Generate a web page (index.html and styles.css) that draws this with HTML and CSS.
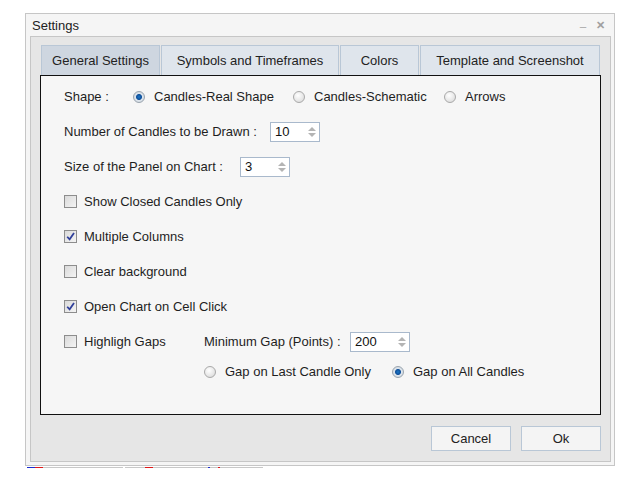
FILE: index.html
```html
<!DOCTYPE html>
<html lang="en">
<head>
  <meta charset="UTF-8">
  <title>Settings</title>
  <link rel="stylesheet" href="styles.css">
</head>
<body>
  <div class="window">
    <div class="titlebar">
      <span class="title">Settings</span>
      <span class="win-btn min">_</span>
      <span class="win-btn close">&#x2715;</span>
    </div>

    <div class="content">
      <div class="tabs">
        <div class="tab active" style="width: 119px">General Settings</div>
        <div class="tab" style="width: 178px">Symbols and Timeframes</div>
        <div class="tab" style="width: 79px">Colors</div>
        <div class="tab" style="width: 180px">Template and Screenshot</div>
      </div>

      <div class="panel">
        <div class="row">
          <span class="label shape-label">Shape :</span>
          <label class="radio-item w-real"><span class="radio checked"></span>Candles-Real Shape</label>
          <label class="radio-item w-schem"><span class="radio"></span>Candles-Schematic</label>
          <label class="radio-item"><span class="radio"></span>Arrows</label>
        </div>

        <div class="row">
          <span class="label w-candles">Number of Candles to be Drawn :</span>
          <div class="spin"><span class="spin-val">10</span><span class="arrows"><i class="up"></i><i class="down"></i></span></div>
        </div>

        <div class="row">
          <span class="label w-size">Size of the Panel on Chart :</span>
          <div class="spin"><span class="spin-val">3</span><span class="arrows"><i class="up"></i><i class="down"></i></span></div>
        </div>

        <div class="row">
          <label class="check-item"><span class="check"></span>Show Closed Candles Only</label>
        </div>

        <div class="row">
          <label class="check-item"><span class="check checked"><svg viewBox="0 0 10 10"><path d="M2 5.2 L4.2 7.6 L8.2 1.8"/></svg></span>Multiple Columns</label>
        </div>

        <div class="row">
          <label class="check-item"><span class="check"></span>Clear background</label>
        </div>

        <div class="row">
          <label class="check-item"><span class="check checked"><svg viewBox="0 0 10 10"><path d="M2 5.2 L4.2 7.6 L8.2 1.8"/></svg></span>Open Chart on Cell Click</label>
        </div>

        <div class="row">
          <label class="check-item gaps"><span class="check"></span>Highligh Gaps</label>
          <span class="label w-gap">Minimum Gap (Points) :</span>
          <div class="spin wide"><span class="spin-val">200</span><span class="arrows"><i class="up"></i><i class="down"></i></span></div>
        </div>

        <div class="row short indent">
          <label class="radio-item w-last"><span class="radio"></span>Gap on Last Candle Only</label>
          <label class="radio-item"><span class="radio checked"></span>Gap on All Candles</label>
        </div>
      </div>

      <div class="buttons">
        <button>Cancel</button>
        <button>Ok</button>
      </div>
    </div>
  </div>

  <div class="behind">
    <span class="blue" style="width: 8px"></span>
    <span class="red" style="width: 8px"></span>
    <span class="gray" style="width: 80px"></span>
    <span class="gap" style="width: 2px"></span>
    <span class="gray" style="width: 20px"></span>
    <span class="red" style="width: 8px"></span>
    <span class="gray" style="width: 55px"></span>
    <span class="blue" style="width: 2px"></span>
    <span class="gray" style="width: 8px"></span>
    <span class="red" style="width: 2px"></span>
    <span class="gray" style="width: 43px"></span>
  </div>
</body>
</html>
```

FILE: styles.css
```css
body {
  margin: 0;
  background: #fff;
  font-family: "Liberation Sans", Arial, sans-serif;
  font-size: 13px;
  color: #1e1e1e;
}

.window {
  margin: 13px 0 0 25px;
  width: 588px;
  height: 451px;
  border: 1px solid #c6c6c6;
  background: #f5f5f5;
  display: flex;
  flex-direction: column;
}

.titlebar {
  height: 22px;
  display: flex;
  align-items: center;
  padding: 0 0 0 6px;
}

.title {
  flex: 1;
  font-size: 13px;
  color: #222;
}

.win-btn {
  color: #a0a0a0;
  font-size: 11px;
}

.win-btn.min {
  margin-right: 10px;
  position: relative;
  top: -3px;
}

.win-btn.close {
  margin-right: 9px;
  font-weight: bold;
}

.content {
  flex: 1;
  margin: 0 3px 3px 4px;
  border: 1px solid #c6c6c6;
  background: #e6e6e6;
  padding: 8px 9px 0 9px;
  display: flex;
  flex-direction: column;
}

.tabs {
  display: flex;
  margin-left: 1px;
  gap: 1px;
}

.tab {
  height: 30px;
  box-sizing: border-box;
  border: 1px solid #b9c7d6;
  border-bottom: none;
  background: #dfe5ec;
  display: flex;
  align-items: center;
  justify-content: center;
  color: #222;
}

.tab.active {
  background: #ced6e0;
}

.panel {
  height: 340px;
  box-sizing: border-box;
  border: 1.5px solid #111;
  background: #f6f6f6;
  padding: 3px 0 0 23px;
}

.row {
  height: 35px;
  display: flex;
  align-items: center;
}

.row.short {
  height: 25px;
}

.row.indent {
  padding-left: 140px;
}

.shape-label {
  width: 69px;
}

.w-candles {
  width: 206px;
}

.w-size {
  width: 176px;
}

.w-gap {
  width: 146px;
}

.radio-item, .check-item {
  display: flex;
  align-items: center;
}

.w-real {
  width: 160px;
}

.w-schem {
  width: 151px;
}

.w-last {
  width: 188px;
}

.gaps {
  width: 140px;
}

.radio {
  width: 10px;
  height: 10px;
  border-radius: 50%;
  border: 1px solid #a9a9a9;
  background: radial-gradient(circle at 40% 35%, #fff 0%, #e2e2e2 70%, #cfcfcf 100%);
  margin-right: 9px;
}

.radio.checked {
  background: radial-gradient(circle at 50% 50%, #1b78c8 0, #0f4f9a 2.5px, #dce4ec 3.5px, #cfd6dd 100%);
  border-color: #9aa4ae;
}

.check {
  width: 11px;
  height: 11px;
  border: 1px solid #8d8d8d;
  background: linear-gradient(135deg, #dadada, #f4f4f4);
  margin-right: 7px;
  display: flex;
}

.check svg {
  width: 11px;
  height: 11px;
}

.check path {
  fill: none;
  stroke: #2f3f9a;
  stroke-width: 1.6;
}

.spin {
  width: 48px;
  height: 18px;
  border: 1px solid #a9b9cc;
  background: #fff;
  display: flex;
  align-items: center;
}

.spin.wide {
  width: 58px;
}

.spin-val {
  flex: 1;
  padding-left: 4px;
  color: #111;
}

.arrows {
  width: 14px;
  display: flex;
  flex-direction: column;
  align-items: center;
  gap: 2px;
}

.arrows i {
  width: 0;
  height: 0;
  border-left: 4px solid transparent;
  border-right: 4px solid transparent;
}

.arrows .up {
  border-bottom: 4px solid #b4b4b4;
}

.arrows .down {
  border-top: 4px solid #b4b4b4;
}

.buttons {
  display: flex;
  justify-content: flex-end;
  gap: 10px;
  padding-top: 11px;
}

button {
  width: 80px;
  height: 25px;
  border: 1px solid #b9c7d6;
  background: #f4f4f4;
  font-family: inherit;
  font-size: 13px;
  color: #222;
}

.behind {
  display: flex;
  margin: 1px 0 0 27px;
  height: 1px;
}

.behind span {
  height: 1px;
}

.behind .blue {
  background: #1a2ed0;
}

.behind .red {
  background: #e01818;
}

.behind .gray {
  background: #c8c8c8;
}
```
